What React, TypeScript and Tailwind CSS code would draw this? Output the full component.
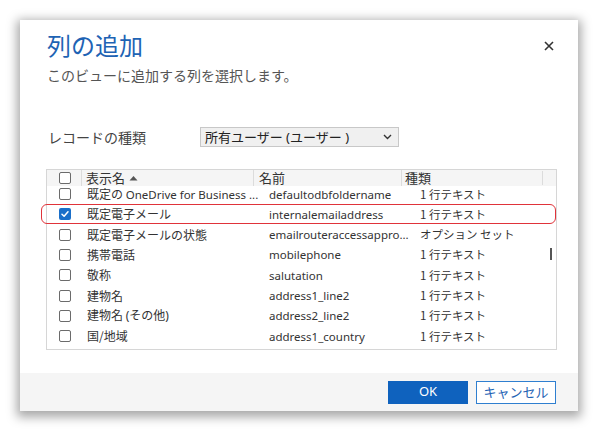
import React from "react";

type Row = { label: React.ReactNode; name: string; type: string; checked?: boolean };

const rows: Row[] = [
  {
    label: (
      <>
        既定の <span className="font-['Noto_Sans',sans-serif] text-[11.5px]">OneDrive for Business ...</span>
      </>
    ),
    name: "defaultodbfoldername",
    type: "1 行テキスト",
  },
  { label: "既定電子メール", name: "internalemailaddress", type: "1 行テキスト", checked: true },
  { label: "既定電子メールの状態", name: "emailrouteraccessappro...", type: "オプション セット" },
  { label: "携帯電話", name: "mobilephone", type: "1 行テキスト" },
  { label: "敬称", name: "salutation", type: "1 行テキスト" },
  { label: "建物名", name: "address1_line2", type: "1 行テキスト" },
  {
    label: (
      <>
        建物名 <span className="font-['Noto_Sans',sans-serif]">(</span>その他<span className="font-['Noto_Sans',sans-serif]">)</span>
      </>
    ),
    name: "address2_line2",
    type: "1 行テキスト",
  },
  { label: "国/地域", name: "address1_country", type: "1 行テキスト" },
];

function Box({ checked }: { checked?: boolean }) {
  if (checked) {
    return (
      <span className="flex h-[12px] w-[12px] items-center justify-center rounded-[2px] bg-[#1a6fc9]">
        <svg width="10" height="10" viewBox="0 0 10 10" fill="none">
          <path d="M2 5.2 L4.1 7.2 L8 2.8" stroke="white" strokeWidth="1.5" strokeLinecap="round" strokeLinejoin="round" />
        </svg>
      </span>
    );
  }
  return <span className="block h-[12px] w-[12px] rounded-[2px] border border-[#6b6b6b] bg-white" />;
}

export default function App() {
  const font = "font-['Segoe_UI','Noto_Sans','Noto_Sans_CJK_JP',sans-serif]";
  return (
    <div className={`h-[431px] w-[599px] bg-white pl-[20px] pt-[20px] ${font}`}>
      <div className="relative flex h-[391px] w-[558px] flex-col bg-white shadow-[0_3px_10px_3px_rgba(0,0,0,0.35)]">
        <div className="flex items-start justify-between pl-[27px] pr-[24px] pt-[10px]">
          <h1 className="text-[24px] leading-[30px] text-[#1e63b4] font-['Noto_Sans_CJK_JP',sans-serif]">列の追加</h1>
          <svg className="mt-[11px]" width="10" height="10" viewBox="0 0 10 10">
            <path d="M1 1 L9 9 M9 1 L1 9" stroke="#333" strokeWidth="1.6" />
          </svg>
        </div>
        <p className="pl-[27px] pt-[6px] text-[14px] leading-[18px] text-[#555] font-['Noto_Sans_CJK_JP',sans-serif]">
          このビューに追加する列を選択します。
        </p>
        <div className="mt-[43px] flex items-center pl-[28px]">
          <span className="w-[152px] text-[14px] leading-[20px] text-[#444] font-['Noto_Sans_CJK_JP',sans-serif]">レコードの種類</span>
          <div className="flex h-[20px] w-[199px] items-center justify-between border border-[#c8c8c8] bg-[#f0f0f0] pl-[4px] pr-[6px] text-[13px] text-[#222]">
            <span className="leading-[18px]">所有ユーザー (ユーザー )</span>
            <svg width="9" height="6" viewBox="0 0 9 6">
              <path d="M1 1 L4.5 4.5 L8 1" stroke="#333" strokeWidth="1.4" fill="none" />
            </svg>
          </div>
        </div>
        <div className="relative ml-[26px] mt-[22px] w-[511px]">
          <div className="h-[181px] overflow-hidden border border-[#d6d6d6] bg-white">
            <div className="flex h-[16px] items-center bg-[#f5f5f5] text-[13px] leading-[16px] text-[#333]">
              <div className="flex w-[34px] justify-center pl-[1px]">
                <Box />
              </div>
              <div className="flex w-[172px] items-center border-l border-[#dcdcdc] pl-[4px]">
                表示名
                <svg className="ml-[4px]" width="9" height="6" viewBox="0 0 9 6">
                  <path d="M0.5 5.5 L4.5 1 L8.5 5.5 Z" fill="#555" />
                </svg>
              </div>
              <div className="w-[148px] border-l border-[#dcdcdc] pl-[5px]">名前</div>
              <div className="w-[141px] border-l border-[#dcdcdc] pl-[3px]">種類</div>
              <div className="h-[14px] border-l border-[#dcdcdc]" />
            </div>
            <div className="-mt-[2px]">
              {rows.map((r, i) => (
                <div key={i} className="flex h-[20.3px] items-center whitespace-nowrap text-[#333]">
                  <div className="flex w-[34px] shrink-0 justify-center pl-[1px]">
                    <Box checked={r.checked} />
                  </div>
                  <div className="w-[182px] shrink-0 pl-[6px] text-[12px] font-['Noto_Sans_CJK_JP',sans-serif]">{r.label}</div>
                  <div className="w-[152px] shrink-0 pl-[6px] text-[11.5px] font-['Noto_Sans',sans-serif]">{r.name}</div>
                  <div className="shrink-0 pl-[5px] text-[11.5px] font-['Noto_Sans_CJK_JP',sans-serif]">{r.type}</div>
                </div>
              ))}
            </div>
          </div>
          <div className="absolute left-[-5px] top-[35px] h-[20px] w-[515px] rounded-[6px] border-[1.5px] border-[#e0333a]" />
          <div className="absolute left-[504px] top-[79px] h-[12px] w-[2px] bg-[#555]" />
        </div>
        <div className="mt-auto flex h-[38px] items-center justify-end gap-[8px] bg-[#f5f5f5] pr-[22px]">
          <button className="h-[23px] w-[80px] bg-[#0f62be] text-[13px] text-white">OK</button>
          <button className="h-[23px] w-[80px] border border-[#2f7fd0] bg-white text-[13px] text-[#1e63b4] font-['Noto_Sans_CJK_JP',sans-serif]">キャンセル</button>
        </div>
      </div>
    </div>
  );
}
